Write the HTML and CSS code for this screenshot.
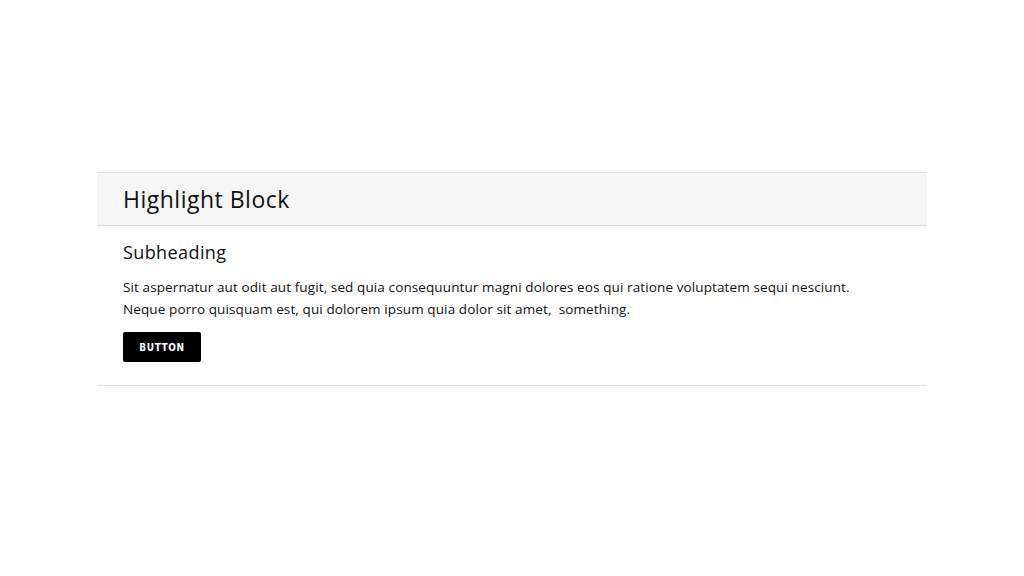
FILE: index.html
```html
<!DOCTYPE html>
<html lang="en">
<head>
  <meta charset="UTF-8">
  <title>Highlight Block</title>
  <link rel="stylesheet" href="styles.css">
</head>
<body>
  <section class="highlight">
    <header class="highlight-head">
      <h2>Highlight Block</h2>
    </header>
    <div class="highlight-body">
      <h3>Subheading</h3>
      <p>Sit aspernatur aut odit aut fugit, sed quia consequuntur magni dolores eos qui ratione voluptatem sequi nesciunt.<br>
        Neque porro quisquam est, qui dolorem ipsum quia dolor sit amet,&nbsp; something.</p>
      <button class="btn">BUTTON</button>
    </div>
  </section>
</body>
</html>
```

FILE: styles.css
```css
body {
  margin: 0;
  font-family: "Open Sans", sans-serif;
  background-color: #fff;
  color: #111;
  padding: 172px 97px 0;
}

.highlight {
  border-top: 1px solid #ddd;
  border-bottom: 1px solid #ddd;
}

.highlight-head {
  background-color: #f6f6f6;
  border-bottom: 1px solid #ddd;
  padding: 0 26px;
  height: 52px;
  display: flex;
  align-items: center;
}

.highlight-head h2 {
  margin: 0;
  font-size: 23px;
  font-weight: 400;
  letter-spacing: 0.5px;
}

.highlight-body {
  padding: 14px 26px 23px;
}

.highlight-body h3 {
  margin: 0 0 12px;
  font-size: 18px;
  font-weight: 400;
  letter-spacing: 0.4px;
}

.highlight-body p {
  margin: 0 0 12px;
  font-size: 13.5px;
  line-height: 22px;
  letter-spacing: 0.11px;
}

.btn {
  background-color: #000;
  color: #fff;
  border: none;
  border-radius: 2px;
  width: 78px;
  height: 30px;
  font-family: "DejaVu Sans Condensed", "DejaVu Sans", sans-serif;
  font-weight: bold;
  font-size: 10px;
  letter-spacing: 0.6px;
  cursor: pointer;
}
```
